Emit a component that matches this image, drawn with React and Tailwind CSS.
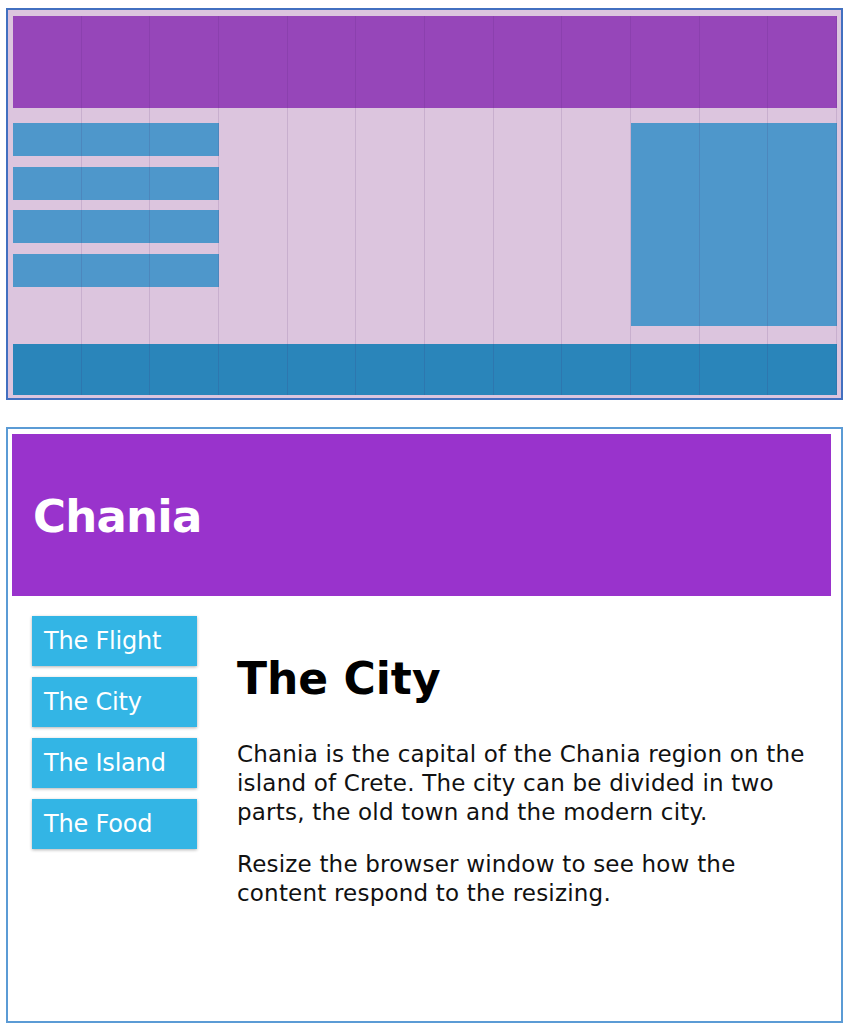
const navItems = ["The Flight", "The City", "The Island", "The Food"];

function GridPreview() {
  return (
    <div className="ml-[6px] mt-[8px] w-[837px] h-[392px] border-2 border-[#4270c0] bg-[#dcc5de] pl-[5px] pr-[4px] pt-[6px] pb-[3px]">
      <div className="relative h-full flex flex-col">
        <div className="h-[92px] bg-[#9646b9]" />
        <div className="flex-1 grid grid-cols-12 pt-[15px]">
          <div className="col-span-3 flex flex-col gap-[10.5px]">
            <div className="h-[33px] bg-[#4e97cb]" />
            <div className="h-[33px] bg-[#4e97cb]" />
            <div className="h-[33px] bg-[#4e97cb]" />
            <div className="h-[33px] bg-[#4e97cb]" />
          </div>
          <div className="col-span-3 col-start-10 h-[203px] bg-[#4e97cb]" />
        </div>
        <div className="h-[51px] bg-[#2a85ba]" />
        {/* column guides drawn over the rows */}
        <div className="absolute inset-0 grid grid-cols-12 pointer-events-none">
          {Array.from({ length: 12 }).map((_, i) => (
            <div key={i} className="border-r border-[rgba(70,30,100,0.13)]" />
          ))}
        </div>
      </div>
    </div>
  );
}

function NavItem({ label }) {
  return (
    <div className="h-[50px] bg-[#33b5e5] text-white text-[24px] leading-[50px] pl-[12px] tracking-[-0.2px] shadow-[0_1px_3px_rgba(0,0,0,0.3)]">
      {label}
    </div>
  );
}

function ChaniaPage() {
  return (
    <div className="ml-[6px] mt-[27px] w-[837px] h-[596px] border-2 border-[#5b9bd5] bg-white pl-[4px] pt-[5px] font-['DejaVu_Sans',sans-serif]">
      <div className="w-[819px] h-[162px] bg-[#9933cc] pl-[21px] pt-[57px]">
        <h1 className="text-white text-[45px] leading-[52px] font-bold tracking-[-0.8px]">
          Chania
        </h1>
      </div>
      <div className="flex pt-[20px] pl-[20px]">
        <div className="w-[165px] flex flex-col gap-[11px]">
          {navItems.map((item) => (
            <NavItem key={item} label={item} />
          ))}
        </div>
        <div className="w-[582px] ml-[40px] pt-[37px] text-[#111] tracking-[0.2px]">
          <h2 className="text-black text-[44px] leading-[52px] font-bold tracking-normal">The City</h2>
          <p className="mt-[35px] text-[23px] leading-[29px]">
            Chania is the capital of the Chania region on the island of Crete. The city can be
            divided in two parts, the old town and the modern city.
          </p>
          <p className="mt-[23px] text-[23px] leading-[29px]">
            Resize the browser window to see how the content respond to the resizing.
          </p>
        </div>
      </div>
    </div>
  );
}

export default function App() {
  return (
    <div className="w-[848px] h-[1030px] bg-white overflow-hidden">
      <GridPreview />
      <ChaniaPage />
    </div>
  );
}
